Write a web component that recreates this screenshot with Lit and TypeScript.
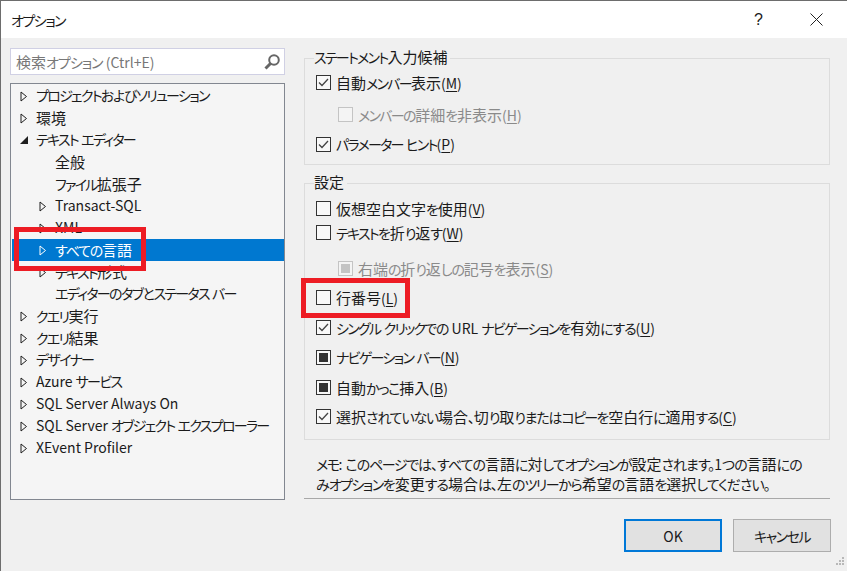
import { LitElement, html, css, svg } from "lit";
import { customElement } from "lit/decorators.js";

type Node = { t: string; lvl: number; arrow?: "open" | "closed"; sel?: boolean };
const tree: Node[] = [
  { t: "プロジェクトおよびソリューション", lvl: 0, arrow: "closed" },
  { t: "環境", lvl: 0, arrow: "closed" },
  { t: "テキスト エディター", lvl: 0, arrow: "open" },
  { t: "全般", lvl: 1 },
  { t: "ファイル拡張子", lvl: 1 },
  { t: "Transact-SQL", lvl: 1, arrow: "closed" },
  { t: "XML", lvl: 1, arrow: "closed" },
  { t: "すべての言語", lvl: 1, arrow: "closed", sel: true },
  { t: "テキスト形式", lvl: 1, arrow: "closed" },
  { t: "エディターのタブとステータス バー", lvl: 1 },
  { t: "クエリ実行", lvl: 0, arrow: "closed" },
  { t: "クエリ結果", lvl: 0, arrow: "closed" },
  { t: "デザイナー", lvl: 0, arrow: "closed" },
  { t: "Azure サービス", lvl: 0, arrow: "closed" },
  { t: "SQL Server Always On", lvl: 0, arrow: "closed" },
  { t: "SQL Server オブジェクト エクスプローラー", lvl: 0, arrow: "closed" },
  { t: "XEvent Profiler", lvl: 0, arrow: "closed" },
];

type Opt = { t: string; k: string; state: "check" | "empty" | "square"; cls: string; off?: boolean };
const g1: Opt[] = [
  { t: "自動メンバー表示", k: "M", state: "check", cls: "" },
  { t: "メンバーの詳細を非表示", k: "H", state: "empty", cls: "g12 sub", off: true },
  { t: "パラメーター ヒント", k: "P", state: "check", cls: "g10" },
];
const g2: Opt[] = [
  { t: "仮想空白文字を使用", k: "V", state: "empty", cls: "" },
  { t: "テキストを折り返す", k: "W", state: "empty", cls: "g4" },
  { t: "右端の折り返しの記号を表示", k: "S", state: "square", cls: "g16 sub", off: true },
  { t: "行番号", k: "L", state: "empty", cls: "g9" },
  { t: "シングル クリックでの URL ナビゲーションを有効にする", k: "U", state: "check", cls: "g10" },
  { t: "ナビゲーション バー", k: "N", state: "square", cls: "g10" },
  { t: "自動かっこ挿入", k: "B", state: "square", cls: "g10" },
  { t: "選択されていない場合、切り取りまたはコピーを空白行に適用する", k: "C", state: "check", cls: "g9" },
];

/* The reference font has condensed kana next to wide kanji: give each script its own run. */
function runs(text: string) {
  const parts = text.match(/[\u30a0-\u30ff]+|[\u3000-\u309f]+|[\u4e00-\u9fff]+|[^\u3000-\u30ff\u4e00-\u9fff]+/g) ?? [];
  return parts.map((p) => {
    const c = p.codePointAt(0)!;
    const cls = c >= 0x30a0 && c <= 0x30ff ? "kata" : c >= 0x3000 && c <= 0x309f ? "hira" : c >= 0x4e00 ? "kanji" : "";
    return cls ? html`<span class=${cls}>${p}</span>` : p;
  });
}

@customElement("app-root")
export class AppRoot extends LitElement {
  static styles = css`
    :host {
      display: block;
      position: relative;
      width: 847px;
      height: 571px;
      box-sizing: border-box;
      overflow: hidden;
      background: #f0f0f0;
      border-top: 1px solid #6d6d6d;
      border-left: 1px solid #6d6d6d;
      font-family: "Noto Sans CJK JP", sans-serif;
      font-size: 14px;
      font-feature-settings: "palt";
      color: #1b1b1b;
    }
    .kata { letter-spacing: -1.7px; }
    .hira { letter-spacing: -1.2px; }
    .kanji { font-size: 15px; }
    .title .kata, .btn .kata, .note .kata { letter-spacing: -1.5px; }
    .note .hira { letter-spacing: -1px; }
    .search .kata { letter-spacing: -1px; }
    .title {
      height: 37px;
      background: #fff;
      display: flex;
      align-items: center;
      padding: 0 24px 0 10px;
    }
    .title .name { flex: 1; }
    .help { font-size: 16px; margin-right: 47px; font-family: "Liberation Sans", sans-serif; }
    .main {
      display: grid;
      grid-template-columns: 275px 526px;
      column-gap: 19px;
      padding: 10px 0 0 9px;
    }
    .search {
      height: 27px;
      box-sizing: border-box;
      border: 1px solid #d0d0e4;
      background: #fff;
      display: flex;
      align-items: center;
      justify-content: space-between;
      padding: 0 3px 0 5px;
      color: #777;
    }
    .tree {
      margin-top: 8px;
      height: 417px;
      box-sizing: border-box;
      border: 1px solid #828790;
      background: #f5f5f5;
      padding: 1px 0 0 1px;
    }
    .node {
      height: 22px;
      display: flex;
      align-items: center;
      white-space: nowrap;
    }
    .node.l0 { padding-left: 8px; }
    .node.l1 { padding-left: 27px; }
    .node.sel { background: #0078d0; color: #fff; }
    .node .lbl { padding-bottom: 2px; }
    .arrow { width: 8px; height: 11px; flex: none; margin-right: 8px; }
    .blank { width: 8px; flex: none; margin-right: 8px; }
    fieldset {
      margin: 0;
      padding: 5px 0 0 11px;
      border: 1px solid #dcdcdc;
      box-sizing: border-box;
      min-width: 0;
    }
    fieldset.a { height: 116px; margin-top: 1px; }
    fieldset.b { height: 266px; margin-top: 9px; padding-top: 6px; }
    legend { padding: 0 3px 2px 0; margin-left: -2px; line-height: 16px; }
    .opt { display: flex; align-items: center; height: 20px; white-space: nowrap; }
    .opt.sub { padding-left: 22px; }
    .opt.g4 { margin-top: 4px; }
    .opt.g9 { margin-top: 9px; }
    .opt.g10 { margin-top: 10px; }
    .opt.g12 { margin-top: 12px; }
    .opt.g16 { margin-top: 16px; }
    .opt.off { color: #8a8a8a; }
    .box {
      width: 15px;
      height: 15px;
      flex: none;
      margin-right: 5px;
      box-sizing: border-box;
      border: 1px solid #333;
      background: #f8f8f8;
      display: flex;
      align-items: center;
      justify-content: center;
    }
    .opt.off .box { border-color: #c4c4c4; background: #f4f4f4; }
    .box i { display: block; width: 9px; height: 9px; background: #333; }
    .opt.off .box i { background: #c4c4c4; }
    u { text-underline-offset: 2px; }
    .note { margin: 14px 0 0 12px; line-height: 20px; width: 492px; }
    .rule { height: 1px; background: #a8a8a8; margin-top: 4px; }
    .buttons {
      display: flex;
      justify-content: flex-end;
      gap: 11px;
      margin: 20px -1px 0 0;
    }
    .btn {
      width: 98px;
      height: 33px;
      box-sizing: border-box;
      background: #e1e1e1;
      border: 1px solid #adadad;
      display: flex;
      align-items: center;
      justify-content: center;
      font-family: inherit;
      font-size: 14px;
      font-feature-settings: "palt";
      color: #1b1b1b;
    }
    .btn.primary { border: 2px solid #0078d7; }
    .mark { position: absolute; border: 5px solid #ed1c24; box-sizing: border-box; pointer-events: none; }
    .m1 { left: 13px; top: 226px; width: 132px; height: 44px; }
    .m2 { left: 300px; top: 277px; width: 109px; height: 40px; }
    .grip { position: absolute; right: 2px; bottom: 2px; }
  `;

  private arrow(kind?: "open" | "closed", sel?: boolean) {
    if (!kind) return html`<span class="blank"></span>`;
    const c = sel ? "#fff" : "#1e1e1e";
    return html`<svg class="arrow" viewBox="0 0 8 11">
      ${kind === "closed"
        ? svg`<path d="M1 1 L6.5 5.5 L1 10 Z" fill="none" stroke=${c} stroke-width="1"/>`
        : svg`<path d="M0 9 L8 9 L8 1 Z" fill=${c}/>`}
    </svg>`;
  }

  private opt(o: Opt) {
    return html`<div class="opt ${o.cls} ${o.off ? "off" : ""}">
      <span class="box">
        ${o.state === "check"
          ? html`<svg width="13" height="13" viewBox="0 0 13 13"><path d="M2 6.5 L5 9.5 L11 3" fill="none" stroke="#444" stroke-width="1.3"/></svg>`
          : o.state === "square"
            ? html`<i></i>`
            : ""}
      </span>
      <span>${runs(o.t)}(<u>${o.k}</u>)</span>
    </div>`;
  }

  render() {
    return html`
      <div class="title">
        <span class="name">${runs("オプション")}</span>
        <span class="help">?</span>
        <svg width="13" height="13" viewBox="0 0 13 13"><path d="M0.5 0.5 L12.5 12.5 M12.5 0.5 L0.5 12.5" stroke="#222" stroke-width="1"/></svg>
      </div>
      <div class="main">
        <div>
          <div class="search">
            <span>${runs("検索オプション (Ctrl+E)")}</span>
            <svg width="18" height="18" viewBox="0 0 18 18">
              <circle cx="11" cy="7" r="4.8" fill="none" stroke="#666" stroke-width="2"/>
              <path d="M7.5 10.5 L2.5 15.5" stroke="#666" stroke-width="3"/>
            </svg>
          </div>
          <div class="tree">
            ${tree.map(
              (n) => html`<div class="node l${n.lvl} ${n.sel ? "sel" : ""}">
                ${this.arrow(n.arrow, n.sel)}<span class="lbl">${runs(n.t)}</span>
              </div>`,
            )}
          </div>
        </div>
        <div>
          <fieldset class="a"><legend>${runs("ステートメント入力候補")}</legend>${g1.map((o) => this.opt(o))}</fieldset>
          <fieldset class="b"><legend>${runs("設定")}</legend>${g2.map((o) => this.opt(o))}</fieldset>
          <div class="note">${runs("メモ: このページでは、すべての言語に対してオプションが設定されます。1つの言語にのみオプションを変更する場合は、左のツリーから希望の言語を選択してください。")}</div>
          <div class="rule"></div>
          <div class="buttons">
            <button class="btn primary">OK</button>
            <button class="btn">${runs("キャンセル")}</button>
          </div>
        </div>
      </div>
      <div class="mark m1"></div>
      <div class="mark m2"></div>
      <svg class="grip" width="12" height="12" viewBox="0 0 12 12" fill="#b8b8b8">
        <rect x="9" y="0" width="2" height="2"/><rect x="6" y="3" width="2" height="2"/><rect x="9" y="3" width="2" height="2"/>
        <rect x="3" y="6" width="2" height="2"/><rect x="6" y="6" width="2" height="2"/><rect x="9" y="6" width="2" height="2"/>
      </svg>
    `;
  }
}
